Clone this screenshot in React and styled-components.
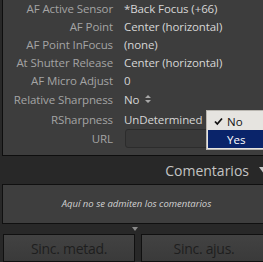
import { createGlobalStyle, styled } from "styled-components";

const Global = createGlobalStyle`
    html, body {
        margin:0;
        padding:0;
        background:#282828;
        overflow:hidden;
    }
    body {
        width:263px;
        height:262px;
        font-family:"Open Sans", "Liberation Sans", Arial, sans-serif;
    }
`

const Page = styled.div`
    width:263px;
    height:262px;
    padding-left:2px;
    box-sizing:border-box;
    display:flex;
    flex-direction:column;
    position:relative;
    overflow:hidden;
`

const MetaPanel = styled.div`
    height:158px;
    box-sizing:border-box;
    background:#3d3d3d;
    border-left:1px solid #0e0e0e;
    border-bottom:1px solid #0e0e0e;
    margin-right:-20px;
    position:relative;
`

const Rows = styled.div`
    display:flex;
    flex-direction:column;
    margin-top:-1px;
`

const Row = styled.div`
    display:grid;
    grid-template-columns:110px 1fr;
    column-gap:11px;
    align-items:center;
    height:${p => p.$h || 18}px;
`

const Label = styled.div`
    text-align:right;
    font-size:11.5px;
    letter-spacing:-0.1px;
    color:#a4a4a4;
    white-space:nowrap;
`

const Value = styled.div`
    font-size:11.5px;
    letter-spacing:-0.1px;
    color:#d6d6d6;
    white-space:nowrap;
    display:flex;
    align-items:center;
    gap:6px;
`

const UrlField = styled.div`
    width:110px;
    height:19px;
    margin-left:1px;
    box-sizing:border-box;
    background:#393939;
    border:1px solid #2c2c2c;
    border-radius:3px;
`

const Popup = styled.div`
    position:absolute;
    left:203px;
    top:110px;
    width:70px;
    box-sizing:border-box;
    background:#e6e4e0;
    border:1px solid #b9b6b0;
    padding:1px;
    font-size:11.5px;
`

const MenuItem = styled.div`
    height:18px;
    display:flex;
    align-items:center;
    padding-left:${p => p.$checked ? 6 : 19}px;
    gap:4px;
    color:${p => p.$selected ? "#ffffff" : "#111111"};
    background:${p => p.$selected ? "#0a246a" : "transparent"};
`

const Header = styled.div`
    height:28px;
    display:flex;
    align-items:center;
    justify-content:flex-end;
    gap:10px;
    margin-right:-6px;
    padding-top:1px;
    box-sizing:border-box;
    font-size:14px;
    color:#c4c4c4;
`

const CommentBox = styled.div`
    height:41px;
    box-sizing:border-box;
    background:#3e3e3e;
    border:1px solid #101010;
    margin-right:-10px;
    display:flex;
    align-items:center;
    justify-content:center;
    padding-right:2px;
    font-size:9.5px;
    font-style:italic;
    color:#d2d2d2;
`

const Splitter = styled.div`
    height:10px;
    display:flex;
    justify-content:center;
    padding-left:4px;
    padding-top:3px;
    box-sizing:border-box;
`

const ButtonRow = styled.div`
    display:grid;
    grid-template-columns:132px 1fr;
    column-gap:6px;
    margin-left:1px;
    margin-right:-10px;
    flex:1;
`

const Button = styled.div`
    box-sizing:border-box;
    height:28px;
    border:1px solid #101010;
    background:linear-gradient(#424242, #3a3a3a);
    display:flex;
    align-items:center;
    justify-content:center;
    padding-top:2px;
    font-size:14px;
    letter-spacing:-0.3px;
    color:#1e1e1e;
    padding-right:${p => p.$pad || 0}px;
`

const UpDown = () => (
    <svg width="6" height="10" viewBox="0 0 6 10">
        <path d="M0 4 L3 1 L6 4 Z M0 6 L3 9 L6 6 Z" fill="#a8a8a8" />
    </svg>
)

const rows = [
    ["AF Active Sensor", "*Back Focus (+66)"],
    ["AF Point", "Center (horizontal)"],
    ["AF Point InFocus", "(none)"],
    ["At Shutter Release", "Center (horizontal)"],
    ["AF Micro Adjust", "0"],
]

export default function App() {
    return (
        <>
            <Global />
            <Page>
                <MetaPanel>
                    <Rows>
                        {rows.map(([l, v]) => (
                            <Row key={l}>
                                <Label>{l}</Label>
                                <Value>{v}</Value>
                            </Row>
                        ))}
                        <Row $h={20}>
                            <Label>Relative Sharpness</Label>
                            <Value>No <UpDown /></Value>
                        </Row>
                        <Row $h={20}>
                            <Label>RSharpness</Label>
                            <Value>UnDetermined</Value>
                        </Row>
                        <Row $h={18}>
                            <Label>URL</Label>
                            <UrlField />
                        </Row>
                    </Rows>
                    <Popup>
                        <MenuItem $checked>
                            <svg width="9" height="9" viewBox="0 0 9 9">
                                <path d="M1 4.5 L3.3 7 L8 1.5" stroke="#111" strokeWidth="1.8" fill="none" />
                            </svg>
                            No
                        </MenuItem>
                        <MenuItem $selected>Yes</MenuItem>
                    </Popup>
                </MetaPanel>
                <Header>
                    Comentarios
                    <svg width="10" height="7" viewBox="0 0 10 7">
                        <path d="M0 0 L10 0 L5 7 Z" fill="#c4c4c4" />
                    </svg>
                </Header>
                <CommentBox>Aquí no se admiten los comentarios</CommentBox>
                <Splitter>
                    <svg width="6" height="5" viewBox="0 0 6 5">
                        <path d="M0 0 L6 0 L3 4 Z" fill="#8a8a8a" />
                    </svg>
                </Splitter>
                <ButtonRow>
                    <Button>Sinc. metad.</Button>
                    <Button $pad={6}>Sinc. ajus.</Button>
                </ButtonRow>
            </Page>
        </>
    );
}
